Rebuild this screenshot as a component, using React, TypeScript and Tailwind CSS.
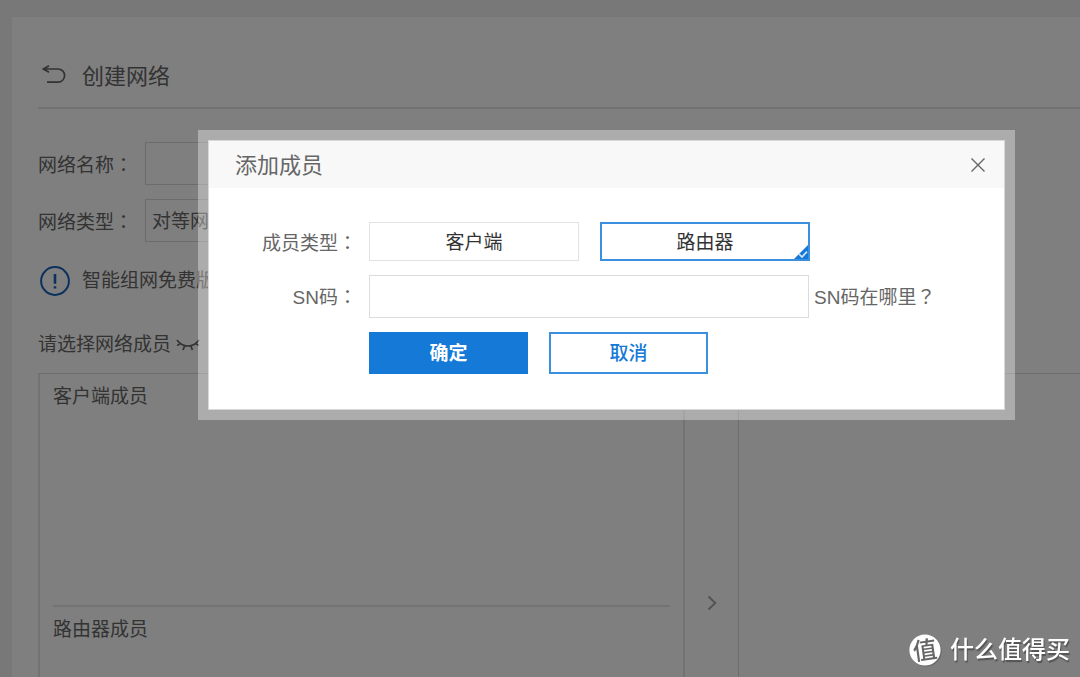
import { useState } from "react";
import type { ReactNode } from "react";

const memberTypes = ["客户端", "路由器"];

function Centered({ children }: { children: ReactNode }) {
  return <span className="font-['Noto_Sans_CJK_TC',sans-serif]">{children}</span>;
}

function BackIcon() {
  return (
    <svg width="24" height="20" viewBox="0 0 24 20" fill="none" stroke="#666" strokeWidth="1.7" aria-hidden="true">
      <path d="M7 0.8L1.4 4L7 7.2M1.6 4H16A6.6 6.6 0 0 1 16 17.2H5" />
    </svg>
  );
}

function InfoIcon() {
  return (
    <svg width="32" height="32" viewBox="0 0 32 32" fill="none" stroke="#1762b8" aria-hidden="true">
      <circle cx="16" cy="16" r="13.9" strokeWidth="2" />
      <path d="M16 9V18.8M16 21.2V23.4" strokeWidth="2.6" />
    </svg>
  );
}

function ClosedEyeIcon() {
  return (
    <svg width="24" height="12" viewBox="0 0 24 12" fill="none" stroke="#666" strokeWidth="1.7" aria-hidden="true">
      <path d="M1 1C4 5.2 8 7 12 7S20 5.2 23 1M4.4 4.2L1.2 6.6M8.8 6.6L7 11M14.8 6.6L16.4 11M19.6 4.2L22.8 6.6" />
    </svg>
  );
}

function Background() {
  return (
    <div className="flex h-screen flex-col bg-[#f0f0f0] pt-[17px] pl-3">
      <main className="flex min-h-0 flex-1 flex-col bg-white pl-[26px]">
        <header className="flex h-[92px] shrink-0 items-center gap-4 border-b-2 border-[#e2e2e2] pt-[26px] pl-1">
          <button type="button" aria-label="返回">
            <BackIcon />
          </button>
          <h1 className="pt-[3px] text-[22px] leading-8">创建网络</h1>
        </header>

        <div className="mt-[33px] flex items-center">
          <label htmlFor="net-name" className="w-[107px] pt-[2px]">
            网络名称<Centered>：</Centered>
          </label>
          <input id="net-name" className="h-[43px] w-[440px] border border-[#d8d8d8] bg-white px-2" />
        </div>
        <div className="mt-[14px] flex items-center">
          <label htmlFor="net-type" className="w-[107px] pt-[2px]">
            网络类型<Centered>：</Centered>
          </label>
          <select id="net-type" className="h-[43px] w-[440px] appearance-none border border-[#d8d8d8] bg-white pt-[2px] pl-[6px]">
            <option>对等网</option>
          </select>
        </div>

        <p className="mt-[23px] flex h-8 items-center gap-[11px] pl-px">
          <InfoIcon />
          <span>智能组网免费版</span>
        </p>
        <div className="mt-8 flex h-8 items-center gap-[5px]">
          <h2>请选择网络成员</h2>
          <button type="button" aria-label="收起">
            <ClosedEyeIcon />
          </button>
        </div>

        <div className="mt-3 flex min-h-0 flex-1">
          <section className="w-[647px] shrink-0 border-x-2 border-t border-x-[#e6e6e6] border-t-[#dadada] px-[13px]">
            <div className="h-[233px] border-b-2 border-[#e6e6e6] pt-[7px]">
              <h3 className="leading-8">客户端成员</h3>
            </div>
            <h3 className="pt-[7px] leading-8">路由器成员</h3>
          </section>
          <div className="flex w-[53px] shrink-0 justify-center pt-[222px]">
            <button type="button" aria-label="添加到网络" className="h-4">
              <svg width="10" height="16" viewBox="0 0 10 16" fill="none" stroke="#a8a8a8" strokeWidth="2" aria-hidden="true">
                <path d="M1.5 1.5L8.3 8L1.5 14.5" />
              </svg>
            </button>
          </div>
          <section className="flex-1 border-t border-l border-[#dadada]" />
        </div>
      </main>
    </div>
  );
}

function AddMemberDialog() {
  const [type, setType] = useState("路由器");
  return (
    <div className="fixed inset-0 flex items-start justify-center bg-black/50 pt-[130px] pl-[133px]">
      <div role="dialog" aria-labelledby="dialog-title" className="w-full max-w-[817px] bg-white/35 p-[10px]">
        <div className="border border-[#d8d8d8] bg-white">
          <header className="flex h-[47px] items-center justify-between bg-[#f8f8f8] pr-[18px] pl-[26px]">
            <h2 id="dialog-title" className="pt-[2px] text-[22px] leading-8">添加成员</h2>
            <button type="button" aria-label="关闭">
              <svg width="16" height="16" viewBox="0 0 16 16" fill="none" stroke="#666" strokeWidth="1.4" aria-hidden="true">
                <path d="M1.5 1.5L14.5 14.5M14.5 1.5L1.5 14.5" />
              </svg>
            </button>
          </header>

          <form className="grid grid-cols-[148px_1fr] gap-x-3 gap-y-[14px] pt-[34px] pb-[35px]" onSubmit={(e) => e.preventDefault()}>
            <span id="member-type" className="self-center pt-[3px] text-right">
              成员类型<Centered>：</Centered>
            </span>
            <div role="group" aria-labelledby="member-type" className="flex gap-[21px]">
              {memberTypes.map((name) => (
                <button
                  key={name}
                  type="button"
                  aria-pressed={type === name}
                  onClick={() => setType(name)}
                  className={
                    type === name
                      ? "relative h-[39px] w-[210px] border-2 border-[#3a90df] pt-[2px] text-[#333]"
                      : "relative h-[39px] w-[210px] border border-[#e2e2e2] pt-[2px] text-[#333]"
                  }
                >
                  {name}
                  {type === name && (
                    <svg className="absolute right-0 bottom-0" width="14" height="14" viewBox="0 0 14 14" aria-hidden="true">
                      <path d="M14 0V14H0Z" fill="#1479d7" />
                      <path d="M5 9L8 12L13 6.6" fill="none" stroke="#d3e6f8" strokeWidth="1.7" />
                    </svg>
                  )}
                </button>
              ))}
            </div>

            <label htmlFor="sn" className="self-center text-right">
              SN码<Centered>：</Centered>
            </label>
            <div className="flex items-center gap-[5px]">
              <input id="sn" className="h-[43px] w-[440px] border border-[#dcdcdc] px-2" />
              <a href="#sn-help">
                SN码在哪里<Centered>？</Centered>
              </a>
            </div>

            <div className="col-start-2 flex gap-[21px]">
              <button type="submit" className="h-[42px] w-[159px] bg-[#1479d7] pt-[2px] font-bold text-white">
                确定
              </button>
              <button type="button" className="h-[42px] w-[159px] border-2 border-[#3a90df] pt-[2px] font-medium text-[#1479d7]">
                取消
              </button>
            </div>
          </form>
        </div>
      </div>
    </div>
  );
}

function Watermark() {
  return (
    <div className="fixed right-[10px] bottom-[9px] flex items-center gap-2 text-[24px] leading-9 text-white [text-shadow:1px_2px_1px_rgb(0_0_0/0.35)]">
      <svg width="34" height="34" viewBox="0 0 34 34" aria-hidden="true">
        <circle cx="18" cy="18" r="15.6" fill="#666" />
        <circle cx="17" cy="17" r="15.6" fill="#fff" />
        <text x="17" y="26" textAnchor="middle" fontSize="24" fontWeight="500" fill="#666" transform="rotate(-8 17 17)" className="[text-shadow:none]">
          值
        </text>
      </svg>
      <span className="font-medium">什么值得买</span>
    </div>
  );
}

export default function App() {
  return (
    <div className="overflow-hidden font-['Liberation_Sans','Noto_Sans_CJK_SC',sans-serif] text-[19px] leading-7 text-[#666]">
      <Background />
      <AddMemberDialog />
      <Watermark />
    </div>
  );
}
